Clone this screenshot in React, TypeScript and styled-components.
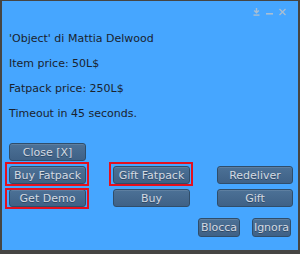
import React from 'react'
import styled, { createGlobalStyle } from 'styled-components'

const GlobalStyle = createGlobalStyle`
  html, body {
    margin: 0;
    padding: 0;
    background: #454545;
  }
  body {
    font-family: "DejaVu Sans", "Liberation Sans", sans-serif;
  }
`

const Frame = styled.div`
  width: 300px;
  height: 254px;
  box-sizing: border-box;
  padding: 1px 2px 4px 2px;
  background: #464543;
`

const Panel = styled.div`
  height: 100%;
  box-sizing: border-box;
  background: #46a6ff;
  padding: 6px 7px 0 7px;
  display: flex;
  flex-direction: column;
`

const TitleBar = styled.div`
  display: flex;
  justify-content: flex-end;
  align-items: center;
  gap: 6px;
  height: 10px;
  padding-right: 5px;
`

const IconBtn = styled.span`
  display: flex;
  width: 7px;
  height: 8px;
  color: #a9bed3;
`

const Message = styled.div`
  margin-top: 15px;
  display: flex;
  flex-direction: column;
  gap: 12px;
`

const Line = styled.p`
  margin: 0;
  height: 13px;
  line-height: 13px;
  font-size: 11px;
  color: #1a232e;
`

const ButtonGrid = styled.div`
  margin-top: 23px;
  display: grid;
  grid-template-columns: 77px 77px 76px;
  column-gap: 27px;
  row-gap: 5px;
`

// $mark = how far above the button the red highlight box starts
const Button = styled.button<{ $mark?: number }>`
  position: relative;
  height: 18px;
  box-sizing: border-box;
  padding: 0;
  border: 1px solid #2f4d6a;
  border-radius: 3px;
  background: linear-gradient(#4c7196, #3f6186);
  box-shadow: inset 0 1px 0 rgba(255, 255, 255, 0.1);
  color: #d3dae2;
  font-family: "DejaVu Sans", "Liberation Sans", sans-serif;
  font-size: 11px;
  text-shadow: 0 1px 0 rgba(0, 0, 0, 0.3);

  &::after {
    content: '';
    display: ${p => (p.$mark ? 'block' : 'none')};
    position: absolute;
    left: -5px;
    right: -4px;
    top: -${p => p.$mark ?? 0}px;
    bottom: -3px;
    border: 2px solid #e3101f;
  }
`

const Actions = styled.div`
  margin-top: 11px;
  display: flex;
  justify-content: flex-end;
  gap: 12px;
`

const SmallButton = styled(Button)<{ $w: number }>`
  width: ${p => p.$w}px;
  height: 19px;
`

export default function App() {
  return (
    <>
      <GlobalStyle />
      <Frame>
        <Panel>
          <TitleBar>
            <IconBtn>
              <svg width="7" height="8" viewBox="0 0 7 8">
                <path d="M3.5 0 V4.5 M1.2 2.5 L3.5 4.8 L5.8 2.5" stroke="currentColor" strokeWidth="1.4" fill="none" />
                <rect x="0.5" y="6.4" width="6" height="1.4" fill="currentColor" />
              </svg>
            </IconBtn>
            <IconBtn>
              <svg width="7" height="8" viewBox="0 0 7 8">
                <rect x="0" y="5" width="7" height="1.6" fill="currentColor" />
              </svg>
            </IconBtn>
            <IconBtn>
              <svg width="7" height="8" viewBox="0 0 7 8">
                <path d="M0.5 1 L6.5 7 M6.5 1 L0.5 7" stroke="currentColor" strokeWidth="1.3" />
              </svg>
            </IconBtn>
          </TitleBar>
          <Message>
            <Line>'Object' di Mattia Delwood</Line>
            <Line>Item price: 50L$</Line>
            <Line>Fatpack price: 250L$</Line>
            <Line>Timeout in 45 seconds.</Line>
          </Message>
          <ButtonGrid>
            <Button>Close [X]</Button>
            <span />
            <span />
            <Button $mark={5}>Buy Fatpack</Button>
            <Button $mark={5}>Gift Fatpack</Button>
            <Button>Redeliver</Button>
            <Button $mark={2}>Get Demo</Button>
            <Button>Buy</Button>
            <Button>Gift</Button>
          </ButtonGrid>
          <Actions>
            <SmallButton $w={42}>Blocca</SmallButton>
            <SmallButton $w={39}>Ignora</SmallButton>
          </Actions>
        </Panel>
      </Frame>
    </>
  )
}
